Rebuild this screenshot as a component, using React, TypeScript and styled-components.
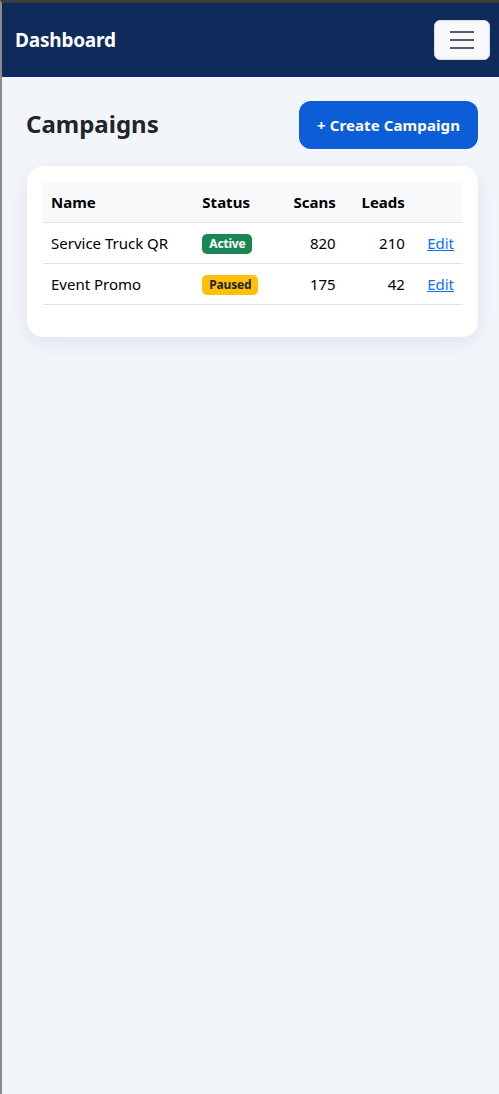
import React from 'react';
import styled, { createGlobalStyle } from 'styled-components';

const GlobalStyle = createGlobalStyle`
  html, body {
    margin: 0;
    padding: 0;
    background-color: #f2f5fa;
  }
  body {
    font-family: 'Noto Sans', 'Open Sans', sans-serif;
  }
`;

const Frame = styled.div`
  min-height: 1091px;
  border-top: 3px solid #3c3c3c;
  border-left: 2px solid #8c8c8c;
  background-color: #f2f5fa;
`;

const NavBar = styled.header`
  display: flex;
  align-items: center;
  justify-content: space-between;
  height: 74px;
  padding: 0 9px 0 13px;
  background-color: #0e2b5c;
`;

const Brand = styled.div`
  color: #ffffff;
  font-size: 19px;
  font-weight: 700;
  letter-spacing: -0.2px;
`;

const MenuButton = styled.button`
  display: flex;
  flex-direction: column;
  align-items: center;
  justify-content: center;
  gap: 6px;
  width: 56px;
  height: 40px;
  padding: 0;
  border: 1px solid #d6d9de;
  border-radius: 6px;
  background-color: #f8f9fa;
`;

const MenuLine = styled.span`
  display: block;
  width: 24px;
  height: 2px;
  background-color: #5a5d62;
`;

const Main = styled.main`
  padding: 24px 21px 0 24px;
`;

const HeadRow = styled.div`
  display: flex;
  align-items: center;
  justify-content: space-between;
`;

const Title = styled.h1`
  margin: 0 0 4px;
  color: #212529;
  font-size: 24px;
  font-weight: 700;
`;

const CreateButton = styled.button`
  height: 48px;
  padding: 0 18px;
  border: none;
  border-radius: 12px;
  background-color: #0b5ed7;
  color: #ffffff;
  font-family: inherit;
  font-size: 15px;
  font-weight: 700;
  letter-spacing: 0.1px;
`;

const Card = styled.div`
  margin-top: 17px;
  margin-left: 1px;
  padding: 16px 16px 32px;
  border-radius: 16px;
  background-color: #ffffff;
  box-shadow: 0 6px 20px rgba(20, 40, 80, 0.08);
`;

const Table = styled.table`
  width: 100%;
  border-collapse: collapse;
  table-layout: fixed;
  font-size: 15px;
  color: #000000;
`;

const Th = styled.th<{ $w: number; $right?: boolean }>`
  box-sizing: border-box;
  width: ${p => p.$w}px;
  height: 40px;
  padding: 0 8px;
  background-color: #f8f9fa;
  border-bottom: 1px solid #dee2e6;
  text-align: ${p => (p.$right ? 'right' : 'left')};
  font-weight: 700;
`;

const Td = styled.td<{ $right?: boolean }>`
  height: 40px;
  padding: 0 8px;
  border-bottom: 1px solid #dee2e6;
  text-align: ${p => (p.$right ? 'right' : 'left')};
  white-space: nowrap;
`;

const Badge = styled.span<{ $tone: 'active' | 'paused' }>`
  display: inline-block;
  padding: 3px 7px;
  border-radius: 5px;
  font-size: 12px;
  font-weight: 700;
  line-height: 14px;
  letter-spacing: -0.2px;
  background-color: ${p => (p.$tone === 'active' ? '#198754' : '#ffc107')};
  color: ${p => (p.$tone === 'active' ? '#ffffff' : '#212529')};
`;

const EditLink = styled.a`
  color: #0d6efd;
  text-decoration: underline;
  cursor: pointer;
`;

const campaigns = [
  { name: 'Service Truck QR', status: 'active' as const, scans: 820, leads: 210 },
  { name: 'Event Promo', status: 'paused' as const, scans: 175, leads: 42 },
];

export default function App() {
  return (
    <>
      <GlobalStyle />
      <Frame>
        <NavBar>
          <Brand>Dashboard</Brand>
          <MenuButton aria-label="Menu">
            <MenuLine />
            <MenuLine />
            <MenuLine />
          </MenuButton>
        </NavBar>
        <Main>
          <HeadRow>
            <Title>Campaigns</Title>
            <CreateButton>+ Create Campaign</CreateButton>
          </HeadRow>
          <Card>
            <Table>
              <thead>
                <tr>
                  <Th $w={151}>Name</Th>
                  <Th $w={82}>Status</Th>
                  <Th $w={67} $right>Scans</Th>
                  <Th $w={69} $right>Leads</Th>
                  <Th $w={49} />
                </tr>
              </thead>
              <tbody>
                {campaigns.map(c => (
                  <tr key={c.name}>
                    <Td>{c.name}</Td>
                    <Td>
                      <Badge $tone={c.status}>{c.status === 'active' ? 'Active' : 'Paused'}</Badge>
                    </Td>
                    <Td $right>{c.scans}</Td>
                    <Td $right>{c.leads}</Td>
                    <Td $right>
                      <EditLink>Edit</EditLink>
                    </Td>
                  </tr>
                ))}
              </tbody>
            </Table>
          </Card>
        </Main>
      </Frame>
    </>
  );
}
